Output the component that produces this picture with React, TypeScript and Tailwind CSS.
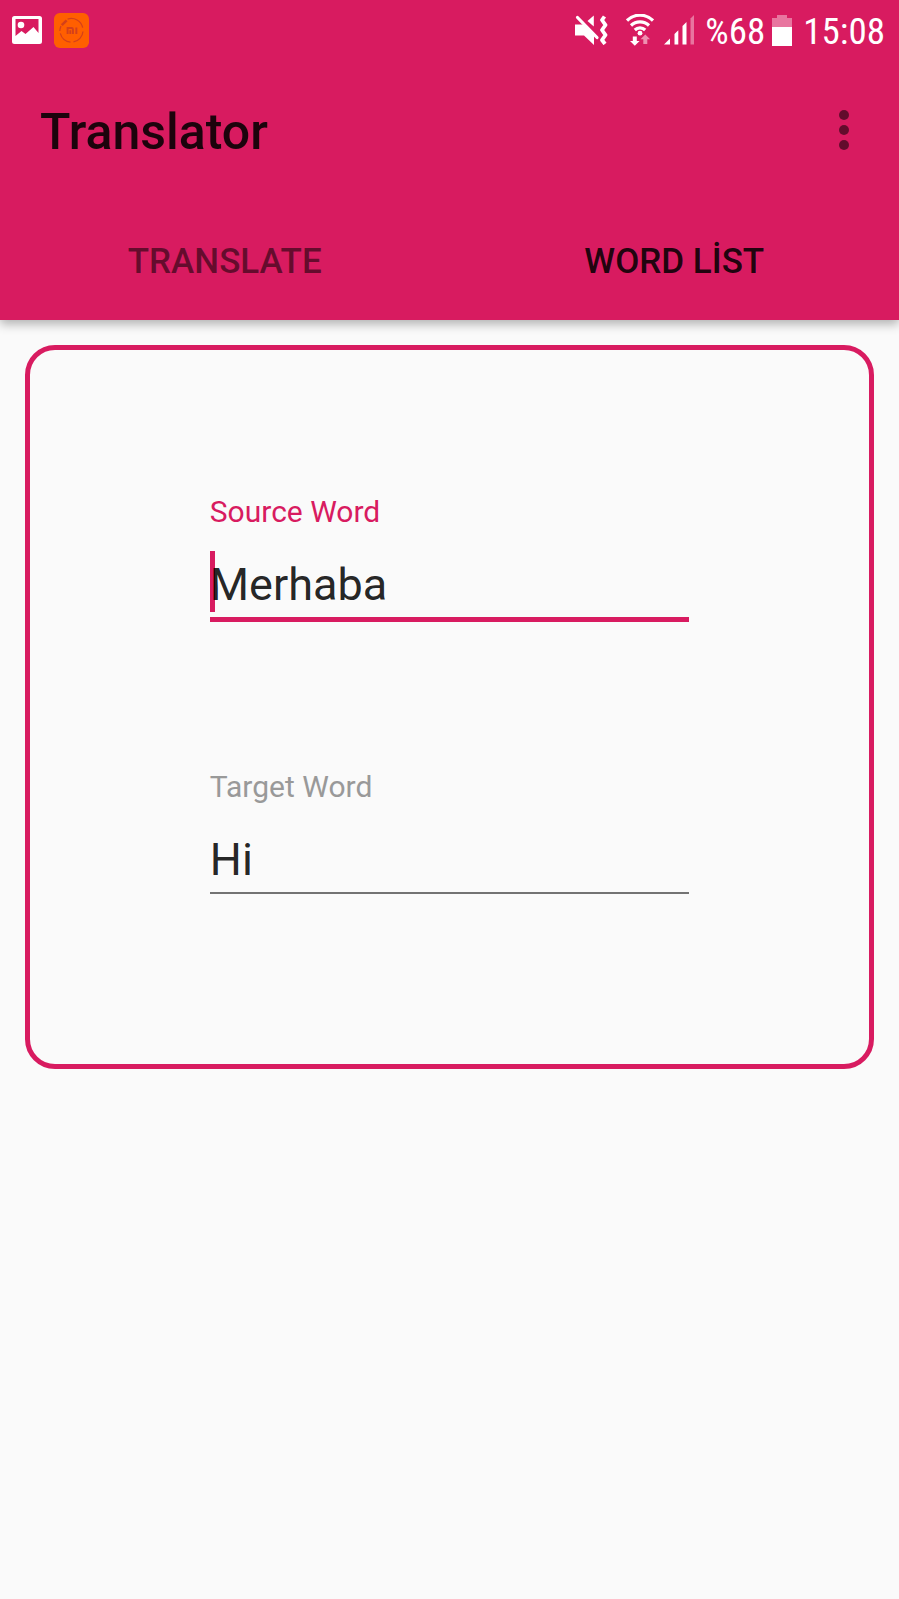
import { useState } from "react";

function ImageIcon() {
  return (
    <svg width="30" height="28" viewBox="0 0 30 28" aria-hidden="true">
      <path
        fillRule="evenodd"
        fill="#fff"
        d="M2.500 0h25A2.500 2.500 0 0 1 30 2.500v23a2.500 2.500 0 0 1-2.500 2.500h-25A2.500 2.500 0 0 1 0 25.500v-23A2.500 2.500 0 0 1 2.500 0ZM3.500 3v17l6-5 4 3 8-7 5 6V3Z"
      />
      <circle cx="9" cy="9" r="3.300" fill="#fff" />
    </svg>
  );
}

function MiIcon() {
  return (
    <svg width="35" height="35" viewBox="0 0 36 36" aria-hidden="true">
      <rect width="36" height="36" rx="6" fill="#ff5f00" />
      <g fill="none" stroke="#d4401a" strokeWidth="1.300">
        <path d="M14 6.200A12 12 0 0 1 29.500 15" />
        <path d="M29.800 19A12 12 0 0 1 20 29.800" />
        <path d="M17 30A12 12 0 0 1 6.500 21" />
        <path d="M6 18.500a12 12 0 0 1 1.200-5" />
        <path d="M8 12.500 13 7.500" strokeWidth="2.600" />
      </g>
      <path
        d="M14 21.500v-6h4q1.500 0 1.500 1.500v4.500M16.800 17.800v3.700M23 15v6.500"
        fill="none"
        stroke="#d4401a"
        strokeWidth="2"
      />
    </svg>
  );
}

function MuteIcon() {
  return (
    <svg width="33" height="30" viewBox="0 0 33 30" aria-hidden="true">
      <path d="M0 9.500h10l9 9V30L9 20.500H0Z" fill="#fff" />
      <path d="M12.500 6 18.800.500v11Z" fill="#fff" />
      <path d="M2.500 2.500 22 22.500" stroke="#fff" strokeWidth="3.200" strokeLinecap="round" />
      <path
        d="M29.500 1.500 27 5l3.500 5L27 15l3.500 5-3.500 5 3 4"
        fill="none"
        stroke="#fff"
        strokeWidth="3.800"
        strokeLinejoin="round"
      />
    </svg>
  );
}

function WifiIcon() {
  return (
    <svg width="28" height="32" viewBox="0 0 28 32" aria-hidden="true">
      <g fill="none" stroke="#fff" strokeWidth="3.200">
        <path d="M1 6.500a18.500 18.500 0 0 1 26 0" />
        <path d="M5 11.500a13 13 0 0 1 18 0" />
        <path d="M8.800 16a7.500 7.500 0 0 1 10.400 0" />
      </g>
      <circle cx="14" cy="19.200" r="2.400" fill="#fff" />
      <path d="M6.800 22.500h4V27h2.800L8.800 31.800 4 27h2.800Z" fill="#fff" />
      <path d="M17.300 30h4v-4.700h2.800L19.300 20.500 14.500 25.300h2.800Z" fill="#ee8fb0" />
    </svg>
  );
}

function SignalIcon() {
  return (
    <svg width="30" height="30" viewBox="0 0 30 30" aria-hidden="true">
      <g fill="#fff">
        <path d="M0 29.500 6 23.500v6Z" />
        <path d="M10.500 19 14.300 15.200v14.300h-3.800Z" />
        <path d="M18.500 11 22.500 7v22.500h-4Z" />
      </g>
      <path d="M26.500 3.500 30 0v29.500h-3.500Z" fill="#e8759f" />
    </svg>
  );
}

function BatteryIcon() {
  return (
    <svg width="20" height="31" viewBox="0 0 20 31" aria-hidden="true">
      <path d="M5 0h10v3h5v9H0V3h5Z" fill="#e8759f" />
      <path d="M0 12h20v19H0Z" fill="#fff" />
    </svg>
  );
}

function StatusBar() {
  return (
    <div className="flex h-15 items-center justify-between pr-[14px] pl-3 text-white">
      <div className="flex items-center gap-3">
        <ImageIcon />
        <MiIcon />
      </div>
      <div className="flex items-center font-['Roboto_Condensed','Liberation_Sans_Narrow',Roboto,sans-serif] text-[37px] leading-10">
        <div className="flex items-center gap-[18px]">
          <MuteIcon />
          <WifiIcon />
        </div>
        <div className="ml-[10px] flex items-center gap-[11px]">
          <SignalIcon />
          <span className="pt-1">%68</span>
        </div>
        <div className="ml-[7px] flex items-center gap-[11px]">
          <BatteryIcon />
          <span className="pt-1">15:08</span>
        </div>
      </div>
    </div>
  );
}

export default function App() {
  const [tab, setTab] = useState("list");
  const [source, setSource] = useState("Merhaba");
  const [target, setTarget] = useState("Hi");

  return (
    <div className="min-h-screen bg-[#fafafa] font-[Roboto,sans-serif]">
      <header className="bg-[#d81b60] shadow-[0_4px_10px_rgba(0,0,0,0.3)]">
        <StatusBar />
        <div className="flex h-35 items-center justify-between pr-10 pl-10">
          <h1 className="pt-1 text-[50px] leading-15 font-medium text-black/87">Translator</h1>
          <button type="button" aria-label="More options" className="flex h-15 w-[30px] items-center justify-center">
            <svg width="10" height="40" viewBox="0 0 10 40" aria-hidden="true" className="fill-black/54">
              <circle cx="5" cy="5" r="5" />
              <circle cx="5" cy="20" r="5" />
              <circle cx="5" cy="35" r="5" />
            </svg>
          </button>
        </div>
        <nav role="tablist" className="grid h-30 grid-cols-2 text-[35px] leading-10 font-medium">
          <button
            type="button"
            role="tab"
            aria-selected={tab === "translate"}
            onClick={() => setTab("translate")}
            className={tab === "translate" ? "pt-1 text-black/87" : "pt-1 text-black/54"}
          >
            TRANSLATE
          </button>
          <button
            type="button"
            role="tab"
            aria-selected={tab === "list"}
            onClick={() => setTab("list")}
            className={tab === "list" ? "pt-1 text-black/87" : "pt-1 text-black/54"}
          >
            WORD LİST
          </button>
        </nav>
      </header>

      <main className="p-[25px]">
        <form className="rounded-[30px] border-5 border-[#d81b60] pt-[142px] pb-[170px]">
          <div className="mx-auto flex w-4/7 flex-col gap-[145px]">
            <div className="flex flex-col">
              <label htmlFor="source" className="text-[30px] leading-10 text-[#d81b60]">
                Source Word
              </label>
              <div className="relative border-b-5 border-[#d81b60] pt-[23px] pb-[2px]">
                <span className="absolute bottom-[5px] left-0 h-[61px] w-[5px] bg-[#d81b60]" />
                <input
                  id="source"
                  value={source}
                  onChange={(e) => setSource(e.target.value)}
                  className="relative block h-15 w-full bg-transparent text-[45px] text-black/87 caret-[#d81b60] outline-none"
                />
              </div>
            </div>
            <div className="flex flex-col">
              <label htmlFor="target" className="text-[30px] leading-10 text-[#999999]">
                Target Word
              </label>
              <div className="border-b-2 border-[#737373] pt-[23px] pb-[2px]">
                <input
                  id="target"
                  value={target}
                  onChange={(e) => setTarget(e.target.value)}
                  className="block h-15 w-full bg-transparent text-[45px] text-black/87 caret-[#d81b60] outline-none"
                />
              </div>
            </div>
          </div>
        </form>
      </main>
    </div>
  );
}
